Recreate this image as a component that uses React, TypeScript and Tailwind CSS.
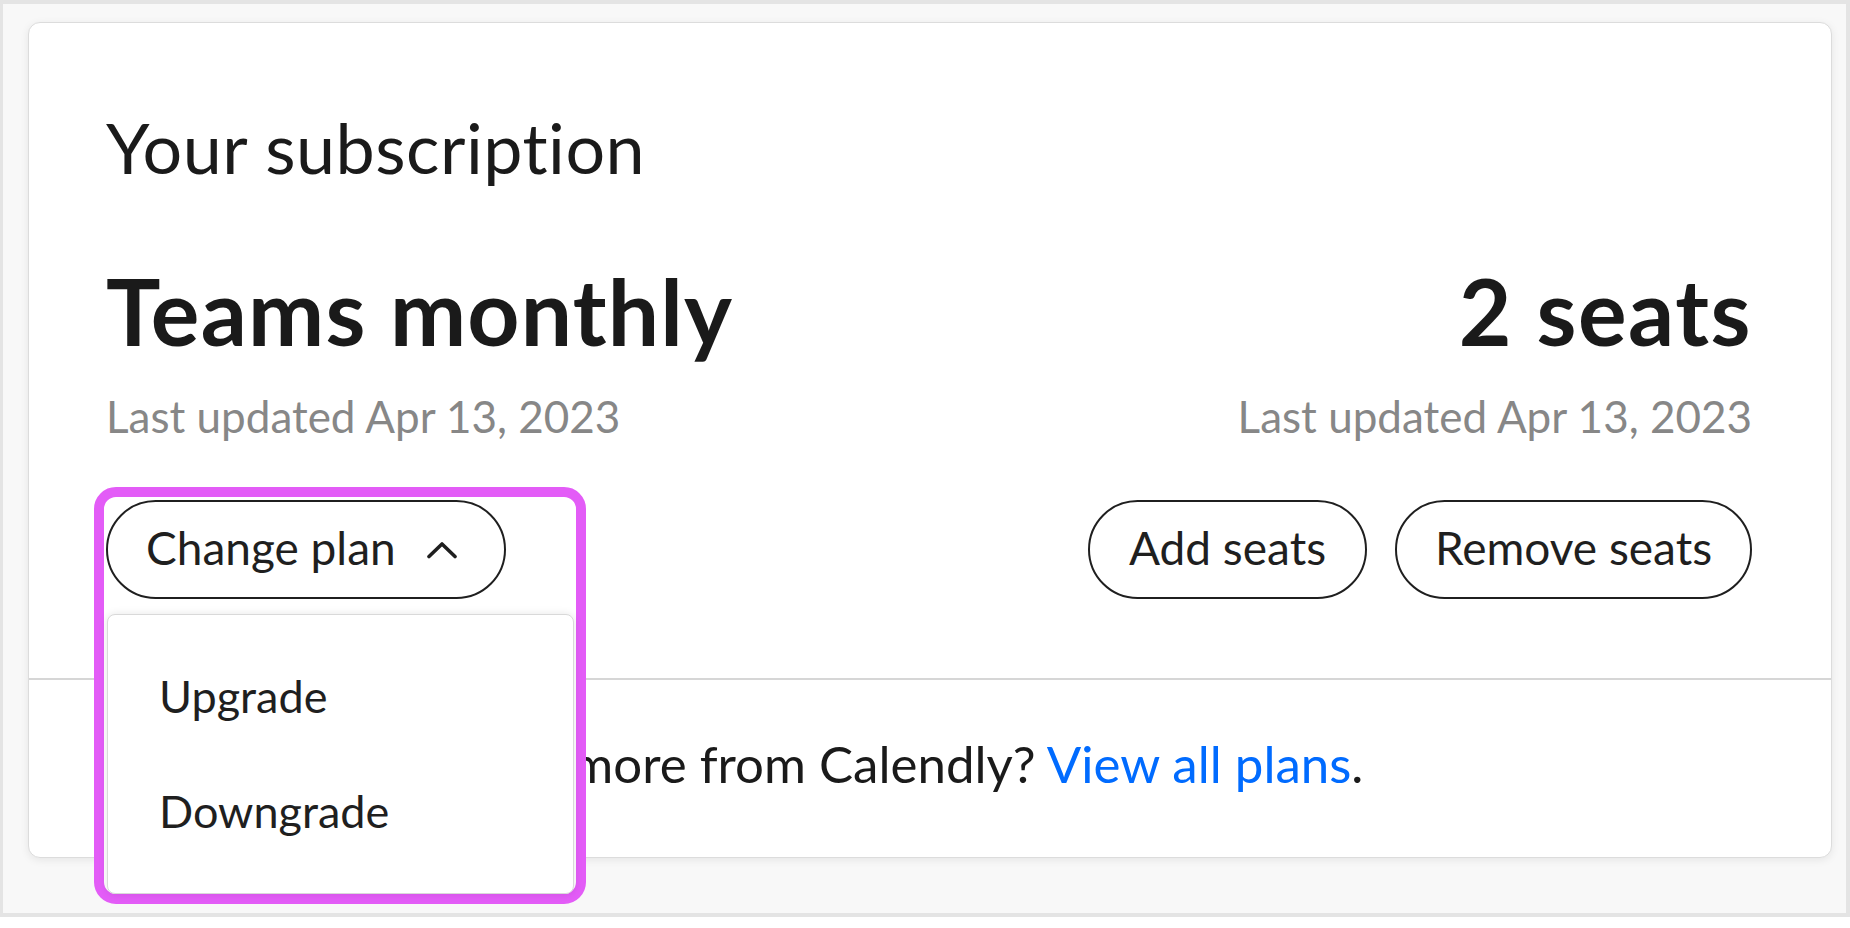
import { ChevronUp } from "lucide-react";

const pill =
  "h-[99px] rounded-full border-2 border-[#1f1f1f] bg-white text-[46px] leading-none flex items-center text-[#1f1f1f]";

const ChangePlan = () => {
  return (
    <div className="relative">
      {/* highlight frame around the open menu */}
      <div className="absolute left-[-12px] top-[-13px] w-[492px] h-[417px] border-[10px] border-[#e35cf7] rounded-[22px] bg-white z-10" />

      <button className={`${pill} relative z-20 w-[400px] pl-[38px] gap-[30px] pb-[3px]`}>
        <span>Change plan</span>
        <svg width="32" height="18" viewBox="0 0 32 18" className="mt-[3px]">
          <path
            d="M3 15.5 L16 3 L29 15.5"
            fill="none"
            stroke="#1f1f1f"
            strokeWidth="3.6"
            strokeLinecap="round"
            strokeLinejoin="round"
          />
        </svg>
      </button>

      <div className="absolute left-[1px] top-[114px] w-[467px] h-[280px] z-30 bg-white border border-[#d9d9d9] rounded-[8px] shadow-[0_0_8px_rgba(0,0,0,0.10)] pt-[24px]">
        {["Upgrade", "Downgrade"].map((item) => (
          <div key={item} className="h-[115px] flex items-center pl-[51px] text-[45px] leading-none text-[#1f1f1f]">
            {item}
          </div>
        ))}
      </div>
    </div>
  );
};

export default function App() {
  return (
    <div className="w-[1850px] h-[928px] bg-white font-['Lato',sans-serif] text-[#1a1a1a]">
      <div className="h-[917px] border-t-4 border-l-[3px] border-r-4 border-b-4 border-[#e4e4e4] bg-[#f8f8f8] pl-[25px] pt-[18px]">
        <div className="w-[1804px] h-[836px] bg-white rounded-[12px] border border-[#dcdcdc] shadow-[0_2px_8px_rgba(0,0,0,0.08)] flex flex-col">
          <section className="pl-[77px] pr-[79px] pt-[89px] pb-[79px]">
            <h2 className="text-[70px] leading-none font-normal tracking-[0.5px]">Your subscription</h2>

            <div className="mt-[83px] flex justify-between">
              <div className="flex flex-col items-start">
                <h3 className="text-[91px] leading-none font-bold tracking-[1.2px]">Teams monthly</h3>
                <p className="mt-[38px] text-[44px] leading-none text-[#878787]">Last updated Apr 13, 2023</p>
                <div className="mt-[62px]">
                  <ChangePlan />
                </div>
              </div>

              <div className="flex flex-col items-end">
                <h3 className="text-[91px] leading-none font-bold tracking-[1.5px]">2 seats</h3>
                <p className="mt-[38px] text-[44px] leading-none text-[#878787]">Last updated Apr 13, 2023</p>
                <div className="mt-[62px] flex gap-[28px]">
                  <button className={`${pill} w-[279px] justify-center pb-[3px]`}>Add seats</button>
                  <button className={`${pill} w-[357px] justify-center pb-[3px]`}>Remove seats</button>
                </div>
              </div>
            </div>
          </section>

          <div className="h-[2px] bg-[#d6d6d6]" />

          <footer className="pt-[58px] pr-[60px] flex justify-center text-[51px] leading-none">
            <p>
              Want more from Calendly? <a className="text-[#006bff]">View all plans</a>.
            </p>
          </footer>
        </div>
      </div>
    </div>
  );
}
